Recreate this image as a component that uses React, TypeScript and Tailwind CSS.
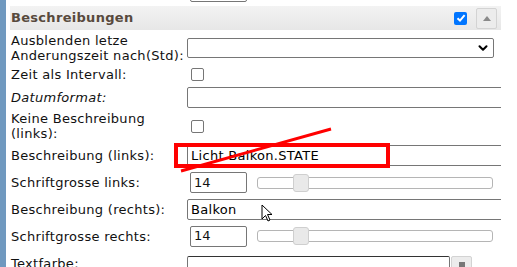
import { ChevronDown } from 'lucide-react';

function Row({ h, label, children }: { h: string; label: React.ReactNode; children?: React.ReactNode }) {
  return (
    <div className={`flex items-center ${h}`}>
      <div className="w-[177px] shrink-0 pl-px leading-[15px] tracking-[0.3px]">{label}</div>
      <div className="flex-1 flex items-center">{children}</div>
    </div>
  );
}

function TextBox({ value, w = 'w-[330px]' }: { value?: string; w?: string }) {
  return (
    <div className={`${w} h-[21px] shrink-0 border border-[#767676] rounded-[2px] px-[3px] flex items-center text-black tracking-[0.3px]`}>
      {value}
    </div>
  );
}

function NumberWithSlider({ value }: { value: string }) {
  return (
    <div className="flex items-center">
      <div className="ml-[3px] w-[57px] h-[21px] border border-[#767676] rounded-[2px] px-[3px] flex items-center">
        {value}
      </div>
      <div className="ml-[10px] relative w-[236px] h-[12px] border border-[#b5b5b5] rounded-[3px] bg-white">
        <div className="absolute left-[35px] -top-[4px] w-[16px] h-[18px] rounded-[3px] border border-[#cfcfcf] bg-[#e9e9e9]" />
      </div>
    </div>
  );
}

function Check() {
  return <div className="ml-[4px] w-[13px] h-[13px] border border-[#767676] rounded-[2px] bg-white" />;
}

export default function App() {
  return (
    <div className="relative flex w-[517px] h-[267px] overflow-hidden bg-white text-[13px] text-[#111] font-['DejaVu_Sans',sans-serif]">
      <div className="w-[6px] shrink-0 bg-[#7099bf]" />
      <div className="ml-[4px] w-[491px] shrink-0 overflow-hidden">
        <div className="h-[6px] relative overflow-hidden">
          <div className="absolute left-[180px] -top-[19px] w-[57px] h-[21px] border border-[#767676] rounded-[2px]" />
        </div>

        <div className="h-[24px] flex items-center bg-gradient-to-b from-[#f3f3f3] to-[#e7e7e7]">
          <span className="pl-px font-bold text-[#584a3d] tracking-[0.3px]">Beschreibungen</span>
          <div className="ml-auto w-[13px] h-[13px] rounded-[2px] bg-[#0075ff] flex items-center justify-center">
            <svg width="10" height="10" viewBox="0 0 10 10">
              <path d="M1.5 5.2 L4 7.6 L8.6 2.2" fill="none" stroke="white" strokeWidth="2" />
            </svg>
          </div>
          <div className="ml-[9px] mr-[4px] w-[21px] h-[21px] rounded-[2px] border border-[#d3d3d3] bg-[#ececec] flex items-center justify-center">
            <svg width="8" height="5" viewBox="0 0 8 5">
              <path d="M0 5 L4 0 L8 5 Z" fill="#8a8a8a" />
            </svg>
          </div>
        </div>

        <Row
          h="h-[35px]"
          label={
            <>
              Ausblenden letze
              <br />
              Anderungszeit nach(Std):
            </>
          }
        >
          <div className="w-[307px] h-[20px] border border-[#767676] rounded-[2px] flex items-center justify-end pr-[3px]">
            <ChevronDown size={14} strokeWidth={3.5} className="text-black" />
          </div>
        </Row>
        <Row h="h-[18px]" label="Zeit als Intervall:">
          <Check />
        </Row>
        <Row h="h-[29px]" label={<span className="italic">Datumformat:</span>}>
          <TextBox />
        </Row>
        <Row
          h="h-[28px]"
          label={
            <>
              Keine Beschreibung
              <br />
              (links):
            </>
          }
        >
          <Check />
        </Row>
        <Row h="h-[31px]" label="Beschreibung (links):">
          <TextBox value="Licht Balkon.STATE" />
        </Row>
        <Row h="h-[23px]" label="Schriftgrosse links:">
          <NumberWithSlider value="14" />
        </Row>
        <Row h="h-[31px]" label="Beschreibung (rechts):">
          <TextBox value="Balkon" />
        </Row>
        <Row h="h-[22px]" label="Schriftgrosse rechts:">
          <NumberWithSlider value="14" />
        </Row>
        <Row h="h-[32px]" label="Textfarbe:">
          <div className="flex items-start h-full pt-[6px]">
            <div className="w-[263px] h-[21px] border border-[#767676] border-t-[#333] rounded-[2px]" />
            <div className="ml-[1px] w-[21px] h-[21px] rounded-[2px] border border-[#d3d3d3] bg-[#ececec] flex justify-center pt-[5px]">
              <div className="w-[6px] h-[10px] bg-[#777]" />
            </div>
          </div>
        </Row>
      </div>

      {/* red annotation */}
      <div className="absolute left-[174px] top-[143px] w-[216px] h-[25px] border-[4px] border-[#ff0000]" />
      <svg className="absolute left-0 top-0" width="517" height="267">
        <path d="M331 129 L181 171" stroke="#ff0000" strokeWidth="3" />
      </svg>

      {/* mouse cursor */}
      <svg className="absolute left-[261px] top-[204px]" width="14" height="20" viewBox="0 0 14 20">
        <path d="M1 1 L1 15 L4.5 11.5 L7 17 L9 16 L6.5 10.5 L11 10.5 Z" fill="white" stroke="black" strokeWidth="1" />
      </svg>
    </div>
  );
}
